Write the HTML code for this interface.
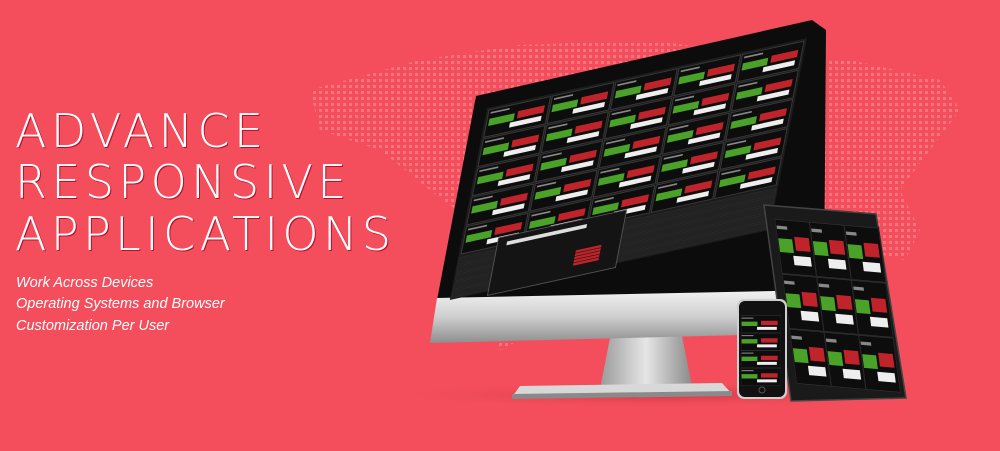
<!DOCTYPE html>
<html><head><meta charset="utf-8"><style>
html,body{margin:0;padding:0;}
body{width:1000px;height:451px;overflow:hidden;background:#f44e5c;position:relative;font-family:"Liberation Sans",sans-serif;}
svg{position:absolute;left:0;top:0;}
.h{position:absolute;left:15px;color:#fff;font-size:46px;letter-spacing:4.4px;text-shadow:1px 1px 0 #b3102a;white-space:nowrap;line-height:1;font-family:"DejaVu Sans","Liberation Sans",sans-serif;font-weight:200;}
.s{position:absolute;left:16px;color:#fff;font-size:14.5px;font-style:italic;white-space:nowrap;line-height:1;}
</style></head><body>
<svg width="1000" height="451" viewBox="0 0 1000 451">
<defs>
<pattern id="dots" width="6" height="6" patternUnits="userSpaceOnUse"><rect x="1" y="1" width="3" height="3" fill="#ffb0b7"/></pattern>
<linearGradient id="chin" x1="0" y1="0" x2="0" y2="1"><stop offset="0" stop-color="#f2f2f2"/><stop offset="0.5" stop-color="#cfcfcf"/><stop offset="1" stop-color="#8e8e8e"/></linearGradient>
<linearGradient id="neck" x1="0" y1="0" x2="1" y2="0"><stop offset="0" stop-color="#9a9a9a"/><stop offset="0.5" stop-color="#e6e6e6"/><stop offset="1" stop-color="#8a8a8a"/></linearGradient>
<radialGradient id="shadow" cx="0.5" cy="0.5" r="0.5"><stop offset="0" stop-color="#c8303d" stop-opacity="0.7"/><stop offset="1" stop-color="#f44e5c" stop-opacity="0"/></radialGradient>
</defs>
<g opacity="0.4">
<path d="M310 90 L420 60 L520 45 L650 40 L760 55 L850 60 L940 80 L960 110 L930 150 L900 190 L920 230 L905 260 L860 250 L820 230 L780 200 L720 230 L620 250 L560 240 L470 220 L430 190 L380 150 L320 130 Z" fill="url(#dots)"/>
<path d="M470 250 L520 260 L540 330 L500 350 L470 300 Z" fill="url(#dots)"/>
</g>
<ellipse cx="660" cy="395" rx="300" ry="14" fill="url(#shadow)"/>
<polygon points="610,338 682,336 692,386 600,389" fill="url(#neck)"/>
<polygon points="520,386 722,383 732,394 512,397" fill="#d8d8d8"/>
<polygon points="512,394 732,391 732,396 512,399" fill="#8a8a8a"/>
<polygon points="476,96 812,20 826,30 824,292 437,300" fill="#0c0c0c"/>
<polygon points="437,298 824,290 822,333 430,343" fill="url(#chin)"/>
<g id="scr" transform="matrix(0.32,-0.07,-0.062,0.32,487,108)"></g>
<polygon points="764,205 876,214 906,398 791,401" fill="#1a1a1a" stroke="#444" stroke-width="1.5"/>
<g id="tab" transform="matrix(0.105,0.009,0.022,0.165,774,218)"></g>
<rect x="737" y="299" width="50" height="100" rx="7" fill="#cfcfcf"/>
<rect x="739" y="301" width="46" height="96" rx="6" fill="#111"/>
<g id="ph" transform="matrix(0.04,0,0,0.1,741,315)"></g>
<circle cx="762" cy="390" r="3" fill="none" stroke="#555"/>
</svg>
<div class="h" style="top:108px">ADVANCE</div>
<div class="h" style="top:159px">RESPONSIVE</div>
<div class="h" style="top:211px">APPLICATIONS</div>
<div class="s" style="top:276px">Work Across Devices</div>
<div class="s" style="top:297px">Operating Systems and Browser</div>
<div class="s" style="top:319px">Customization Per User</div>
<script>
function tiles(id,cols,rows,W,H,extra){
 var g=document.getElementById(id),s='';
 s+='<rect x="0" y="0" width="'+W+'" height="'+H+'" fill="#1c1c1c"/>';
 var tw=(W-10)/cols,th=extra?(H*0.76)/rows:H/rows;
 for(var r=0;r<rows;r++)for(var c=0;c<cols;c++){
  var x=5+c*tw,y=5+r*th;
  s+='<rect x="'+(x+3)+'" y="'+(y+3)+'" width="'+(tw-6)+'" height="'+(th-6)+'" fill="#0d0d0d" stroke="#3a3a3a" stroke-width="3"/>';
  s+='<rect x="'+(x+10)+'" y="'+(y+th*0.35)+'" width="'+(tw*0.4)+'" height="'+(th*0.25)+'" fill="#4aa328"/>';
  s+='<rect x="'+(x+tw*0.5)+'" y="'+(y+th*0.3)+'" width="'+(tw*0.42)+'" height="'+(th*0.25)+'" fill="#c0242a"/>';
  s+='<rect x="'+(x+tw*0.4)+'" y="'+(y+th*0.65)+'" width="'+(tw*0.5)+'" height="'+(th*0.17)+'" fill="#eee"/>';
  s+='<rect x="'+(x+10)+'" y="'+(y+th*0.12)+'" width="'+(tw*0.3)+'" height="'+(th*0.06)+'" fill="#888"/>';
 }
 if(extra){
  var y0=H*0.78;
  for(var i=0;i<5;i++)s+='<rect x="5" y="'+(y0+i*26)+'" width="'+(W-10)+'" height="22" fill="#222" stroke="#333"/>';
  s+='<rect x="'+W*0.12+'" y="'+(H*0.72)+'" width="'+W*0.4+'" height="'+H*0.3+'" fill="#141414" stroke="#555" stroke-width="3"/>';
  s+='<rect x="'+W*0.15+'" y="'+(H*0.75)+'" width="'+W*0.25+'" height="12" fill="#ddd"/>';
  for(var k=0;k<5;k++)s+='<rect x="'+(W*0.38)+'" y="'+(H*0.88+k*10)+'" width="'+W*0.08+'" height="8" fill="#c0242a"/>';
 }
 g.innerHTML=s;
}
tiles('scr',5,5,1000,600,true);
tiles('tab',3,3,1000,1000,false);
tiles('ph',1,4,1000,700,false);
</script>
</body></html>
